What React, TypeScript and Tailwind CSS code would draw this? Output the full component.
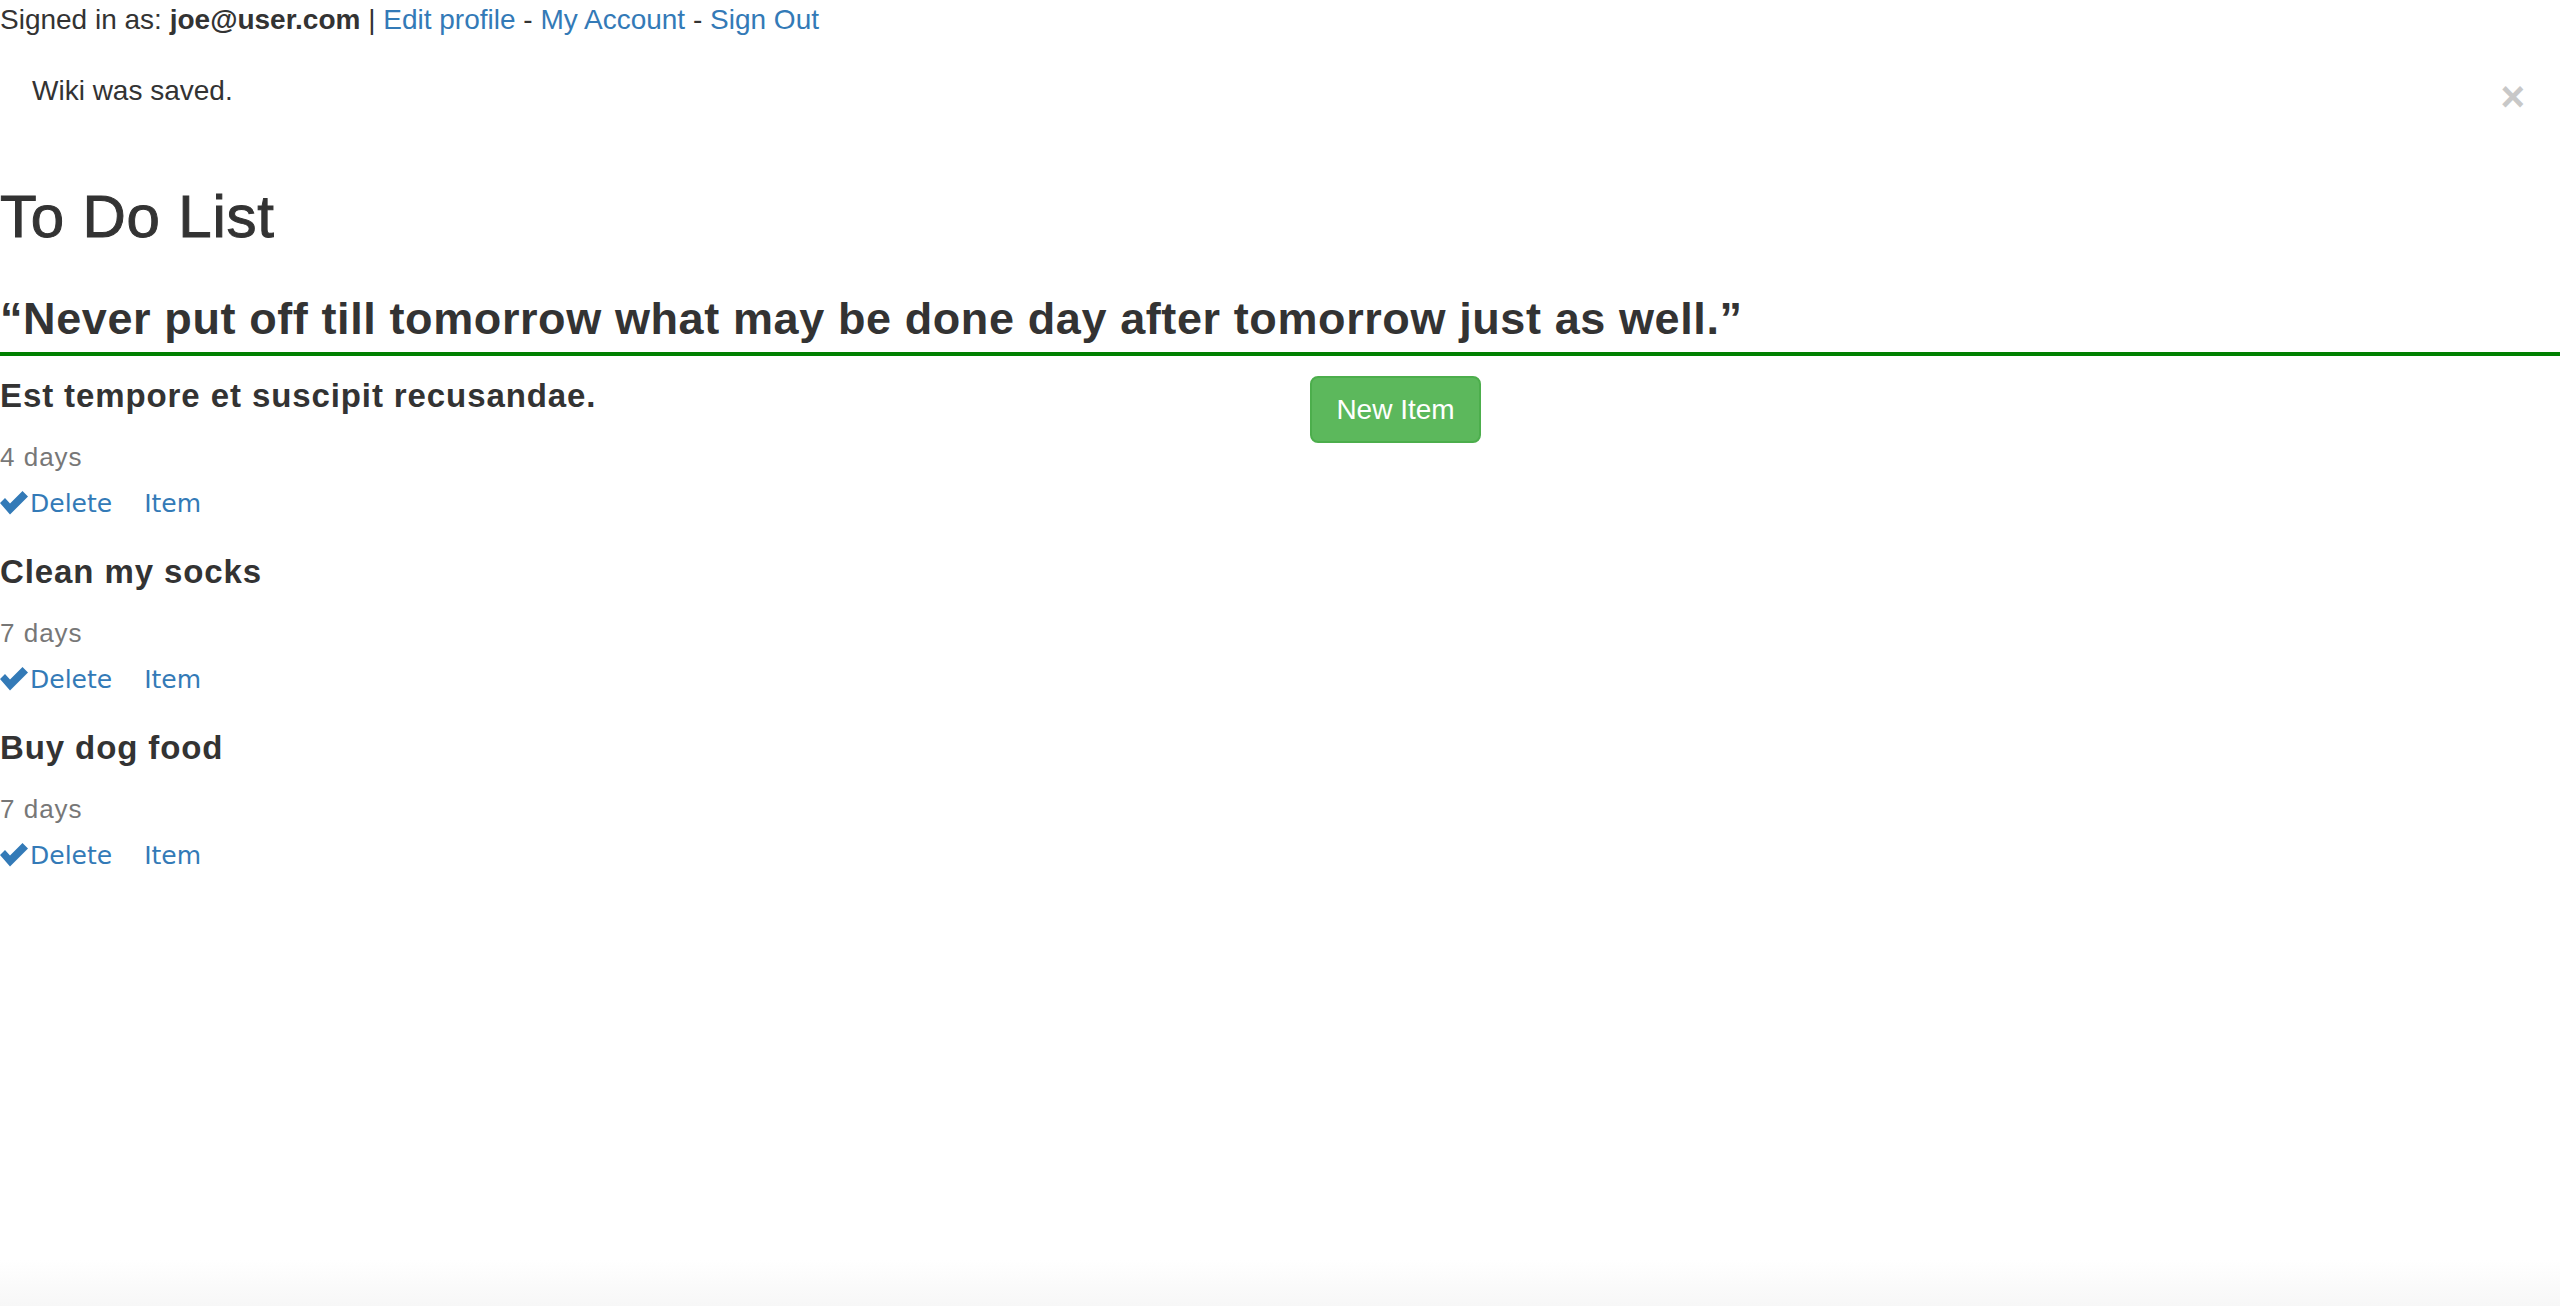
import React from "react";

const items = [
  { title: "Est tempore et suscipit recusandae.", age: "4 days" },
  { title: "Clean my socks", age: "7 days" },
  { title: "Buy dog food", age: "7 days" },
];

function CheckIcon() {
  return (
    <svg width="28" height="25" viewBox="0 0 28 25" className="shrink-0 mt-[-4px]" aria-hidden>
      <polygon points="0,13 5,8 10,13.5 22.5,1 28,6.5 10,24.5" fill="#337ab7" />
    </svg>
  );
}

export default function App() {
  return (
    <div className="min-h-screen flex flex-col bg-white text-[#333] font-['Liberation_Sans',Arial,sans-serif]">
      {/* session bar */}
      <div className="text-[28px] leading-[40px] whitespace-nowrap">
        Signed in as: <b>joe@user.com</b> | <a className="text-[#337ab7]">Edit profile</a> -{" "}
        <a className="text-[#337ab7]">My Account</a> - <a className="text-[#337ab7]">Sign Out</a>
      </div>

      {/* flash */}
      <div className="flex justify-between items-start pl-[32px] pr-[35px] pt-[31px] pb-[29px] text-[28px] leading-[40px]">
        <span>Wiki was saved.</span>
        <span className="h-[40px] text-[42px] leading-[40px] font-bold text-[#c8c8c8] translate-y-[6px]">×</span>
      </div>

      <h2 className="mt-[44px] text-[60px] leading-[66px] font-normal tracking-[0.8px] [-webkit-text-stroke:1px_#333]">
        To Do List
      </h2>

      <h3 className="mt-[45px] text-[45px] leading-[48px] font-bold tracking-[0.6px] pb-[9px] border-b-4 border-[#008000]">
        “Never put off till tomorrow what may be done day after tomorrow just as well.”
      </h3>

      <div className="grid grid-cols-2">
        <div className="flex flex-col pt-[22px]">
          {items.map((it) => (
            <div key={it.title} className="flex flex-col pb-[32px]">
              <div className="text-[33px] leading-[36px] font-bold tracking-[0.9px]">{it.title}</div>
              <div className="mt-[26px] text-[26px] leading-[34px] text-[#777] tracking-[1px]">{it.age}</div>
              <div className="mt-[12px] flex items-center h-[36px] text-[25px] text-[#337ab7] font-['DejaVu_Sans',Verdana,sans-serif]">
                <CheckIcon />
                <a className="ml-[2px]">Delete</a>
                <a className="ml-[32px]">Item</a>
              </div>
            </div>
          ))}
        </div>
        <div className="pl-[30px] pt-[20px]">
          <button className="w-[171px] h-[67px] rounded-[8px] bg-[#5cb85c] border-2 border-[#4cae4c] text-white text-[28px] leading-[40px]">
            New Item
          </button>
        </div>
      </div>

      <div className="mt-auto h-[46px] bg-gradient-to-b from-white to-[#f7f7f7]" />
    </div>
  );
}
